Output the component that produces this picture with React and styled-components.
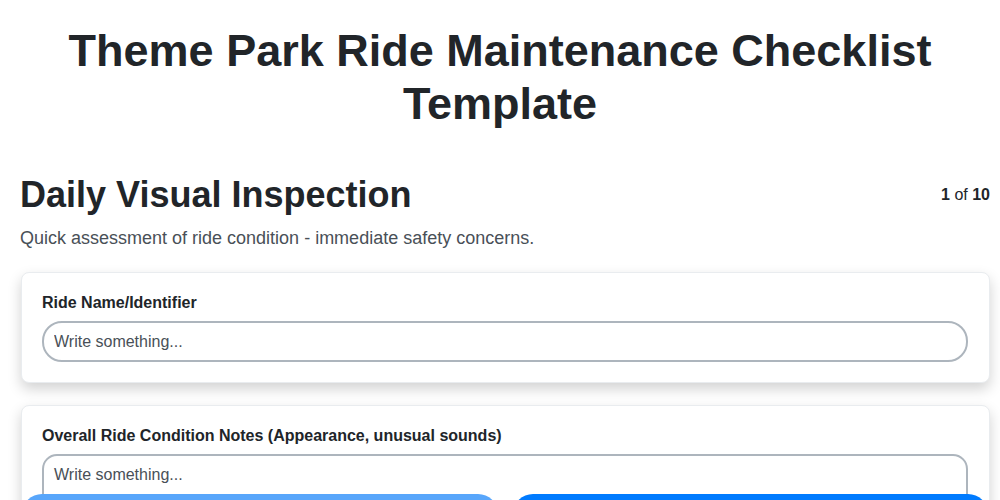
import styled, { createGlobalStyle } from "styled-components";

const GlobalStyle = createGlobalStyle`
  * {
    box-sizing: border-box;
  }
  body {
    margin: 0;
    background: #ffffff;
    font-family: "Liberation Sans", Arial, sans-serif;
    color: #212529;
  }
`;

const Page = styled.div`
  padding: 0 10px 80px 20px;
`;

const Title = styled.h1`
  margin: 0 5px 0 -5px;
  padding: 24px 30px 0;
  font-size: 45px;
  line-height: 53px;
  font-weight: bold;
  text-align: center;
  color: #212529;
`;

const SectionHeader = styled.div`
  display: flex;
  justify-content: space-between;
  align-items: flex-start;
  margin-top: 44px;
`;

const SectionTitle = styled.h2`
  margin: 0;
  font-size: 36px;
  line-height: 42px;
  font-weight: bold;
`;

const Counter = styled.div`
  margin-top: 12px;
  font-size: 16px;
  color: #212529;

  b {
    font-weight: bold;
  }
`;

const Subtitle = styled.p`
  margin: 10px 0 0;
  font-size: 18px;
  line-height: 24px;
  color: #495057;
`;

const CardList = styled.div`
  display: flex;
  flex-direction: column;
  gap: 22px;
  margin-top: 22px;
`;

const Card = styled.div`
  margin-left: 1px;
  padding: 20px 21px 20px 20px;
  border: 1px solid #e9ecef;
  border-radius: 8px;
  background: #ffffff;
  box-shadow: 0 6px 14px rgba(0, 0, 0, 0.18);
`;

const Label = styled.label`
  display: block;
  margin-bottom: 9px;
  font-size: 16px;
  line-height: 19px;
  font-weight: bold;
  color: #212529;
`;

const TextInput = styled.input`
  display: block;
  width: 100%;
  height: 41px;
  padding: 0 10px;
  border: 2px solid #adb5bd;
  border-radius: 20px;
  font-family: inherit;
  font-size: 16px;
  color: #212529;
  outline: none;

  &::placeholder {
    color: #495057;
  }
`;

const TextArea = styled.textarea`
  display: block;
  width: 100%;
  height: 100px;
  margin-top: 1px;
  padding: 10px 10px;
  border: 2px solid #adb5bd;
  border-radius: 15px;
  font-family: inherit;
  font-size: 16px;
  color: #212529;
  resize: none;
  outline: none;

  &::placeholder {
    color: #495057;
  }
`;

const Footer = styled.div`
  position: fixed;
  left: 22px;
  right: 12px;
  bottom: -60px;
  display: flex;
  gap: 15px;
`;

const NavButton = styled.button`
  flex: 1;
  height: 66px;
  padding-top: 30px;
  border: none;
  border-radius: 20px;
  background: ${({ $primary }) => ($primary ? "#007bff" : "#58a6fb")};
  color: #ffffff;
  font-family: inherit;
  font-size: 16px;
  font-weight: bold;
  cursor: pointer;
`;

const App = () => {
  return (
    <>
      <GlobalStyle />
      <Page>
        <Title>Theme Park Ride Maintenance Checklist Template</Title>
        <SectionHeader>
          <SectionTitle>Daily Visual Inspection</SectionTitle>
          <Counter>
            <b>1</b> of <b>10</b>
          </Counter>
        </SectionHeader>
        <Subtitle>Quick assessment of ride condition - immediate safety concerns.</Subtitle>
        <CardList>
          <Card>
            <Label>Ride Name/Identifier</Label>
            <TextInput type="text" placeholder="Write something..." />
          </Card>
          <Card>
            <Label>Overall Ride Condition Notes (Appearance, unusual sounds)</Label>
            <TextArea placeholder="Write something..." />
          </Card>
        </CardList>
      </Page>
      <Footer>
        <NavButton>Previous</NavButton>
        <NavButton $primary>Next</NavButton>
      </Footer>
    </>
  );
};

export default App;
